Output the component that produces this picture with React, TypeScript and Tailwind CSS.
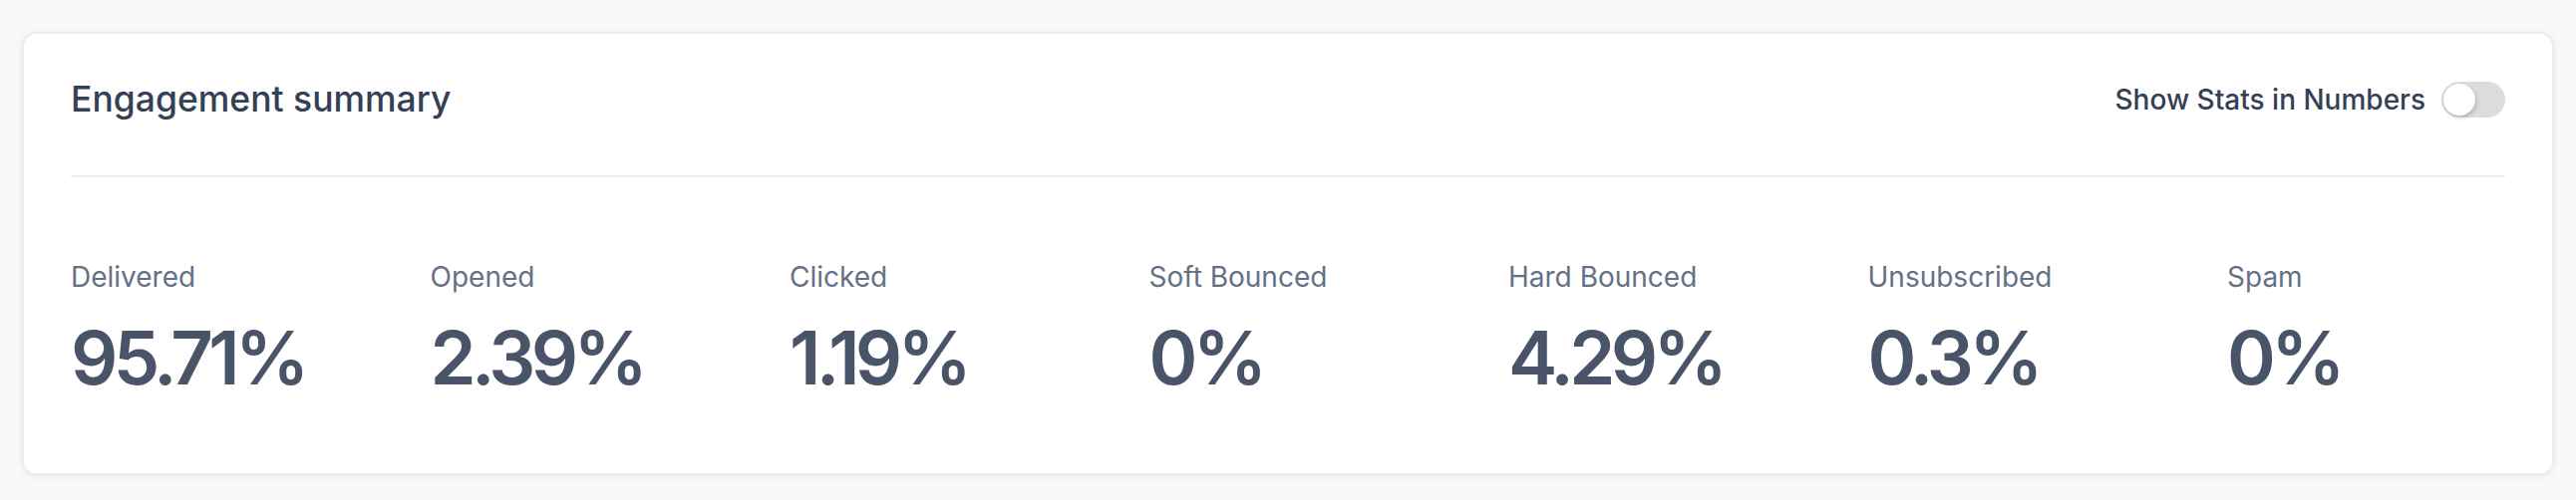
import React, { useState } from 'react';

const stats = [
  { label: 'Delivered', value: '95.71%' },
  { label: 'Opened', value: '2.39%' },
  { label: 'Clicked', value: '1.19%' },
  { label: 'Soft Bounced', value: '0%' },
  { label: 'Hard Bounced', value: '4.29%' },
  { label: 'Unsubscribed', value: '0.3%' },
  { label: 'Spam', value: '0%' },
];

const App: React.FC = () => {
  const [inNumbers, setInNumbers] = useState(false);

  return (
    <div className="min-h-screen bg-[#f8f9fb] px-[22px] pt-[32px] pb-[25px] font-['Inter',sans-serif]">
      <div className="rounded-[14px] border-2 border-[#eaecf0] bg-white px-[47px] pt-[46px] pb-[76px] shadow-[0_2px_6px_rgba(16,24,40,0.08)]">
        {/* header */}
        <div className="flex items-center justify-between border-b-2 border-[#eaecf0] pb-[56px]">
          <h2 className="text-[35.5px] leading-[40px] font-medium text-[#344054]">Engagement summary</h2>
          <div className="flex items-center gap-[16px]">
            <span className="text-[28px] leading-[40px] font-medium text-[#344054]">Show Stats in Numbers</span>
            <button
              onClick={() => setInNumbers(!inNumbers)}
              className={`relative h-[36px] w-[64px] rounded-full ${inNumbers ? 'bg-[#475467]' : 'bg-[#dcdcdc]'}`}
            >
              <span
                className={`absolute top-[2px] h-[32px] w-[32px] rounded-full bg-white shadow-[1px_2px_4px_rgba(0,0,0,0.2)] ${inNumbers ? 'left-[30px]' : 'left-[2px]'}`}
              />
            </button>
          </div>
        </div>

        {/* stats row */}
        <div className="flex pt-[80px]">
          {stats.map((s) => (
            <div key={s.label} className="w-[360.5px] shrink-0">
              <div className="text-[28px] leading-[40px] text-[#667085]">{s.label}</div>
              <div className="mt-[21px] text-[74px] leading-[80px] font-semibold tracking-[-0.062em] text-[#4a5468]">
                {s.value}
              </div>
            </div>
          ))}
        </div>
      </div>
    </div>
  );
};

export default App;
